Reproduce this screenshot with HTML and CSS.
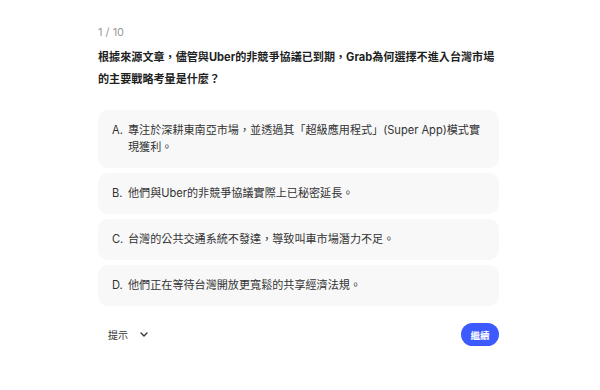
FILE: index.html
```html
<!DOCTYPE html>
<html lang="zh-Hant">
<head>
  <meta charset="UTF-8">
  <meta name="viewport" content="width=device-width, initial-scale=1.0">
  <title>測驗</title>
  <link rel="stylesheet" href="styles.css">
</head>
<body>
  <main class="quiz">
    <div class="counter">1 / 10</div>
    <h1 class="question">根據來源文章，儘管與Uber的非競爭協議已到期，Grab為何選擇不進入台灣市場的主要戰略考量是什麼？</h1>

    <ul class="options">
      <li class="option"><span class="letter">A.</span><span class="text">專注於深耕東南亞市場，並透過其「超級應用程式」(Super App)模式實現獲利。</span></li>
      <li class="option"><span class="letter">B.</span><span class="text">他們與Uber的非競爭協議實際上已秘密延長。</span></li>
      <li class="option"><span class="letter">C.</span><span class="text">台灣的公共交通系統不發達，導致叫車市場潛力不足。</span></li>
      <li class="option"><span class="letter">D.</span><span class="text">他們正在等待台灣開放更寬鬆的共享經濟法規。</span></li>
    </ul>

    <div class="footer">
      <button class="hint" type="button">提示
        <svg width="8" height="5" viewBox="0 0 8 5"><path d="M1 1l3 3 3-3" fill="none" stroke="#333" stroke-width="1.3" stroke-linecap="round" stroke-linejoin="round"/></svg>
      </button>
      <button class="next" type="button">繼續</button>
    </div>
  </main>
</body>
</html>
```

FILE: styles.css
```css
body {
  margin: 0;
  background: #ffffff;
  font-family: "Inter", "Noto Sans CJK TC", sans-serif;
  color: #1f1f1f;
}

.quiz {
  width: 401px;
  margin-left: 98px;
  padding-top: 24px;
}

.counter {
  font-size: 11px;
  line-height: 16px;
  color: #9a9a9a;
}

.question {
  margin: 6px 0 20px;
  font-size: 11.1px;
  line-height: 22px;
  font-weight: 700;
  color: #1f1f1f;
}

.options {
  list-style: none;
  margin: 0;
  padding: 0;
  display: flex;
  flex-direction: column;
  gap: 5px;
}

.option {
  display: flex;
  background-color: #f8f8f8;
  border-radius: 10px;
  padding: 12px 14px;
  font-size: 11.1px;
  line-height: 17px;
  color: #333333;
}

.letter {
  width: 16px;
  flex-shrink: 0;
}

.footer {
  display: flex;
  justify-content: space-between;
  align-items: center;
  margin-top: 17px;
}

.hint {
  display: flex;
  align-items: center;
  gap: 12px;
  border: none;
  background: none;
  padding: 0 0 0 10px;
  font-family: inherit;
  font-size: 10px;
  color: #333333;
  cursor: pointer;
}

.next {
  border: none;
  border-radius: 12px;
  background-color: #3d5afe;
  color: #ffffff;
  font-family: inherit;
  font-size: 9.5px;
  font-weight: 700;
  width: 38px;
  height: 23px;
  padding: 0;
  cursor: pointer;
}
```
